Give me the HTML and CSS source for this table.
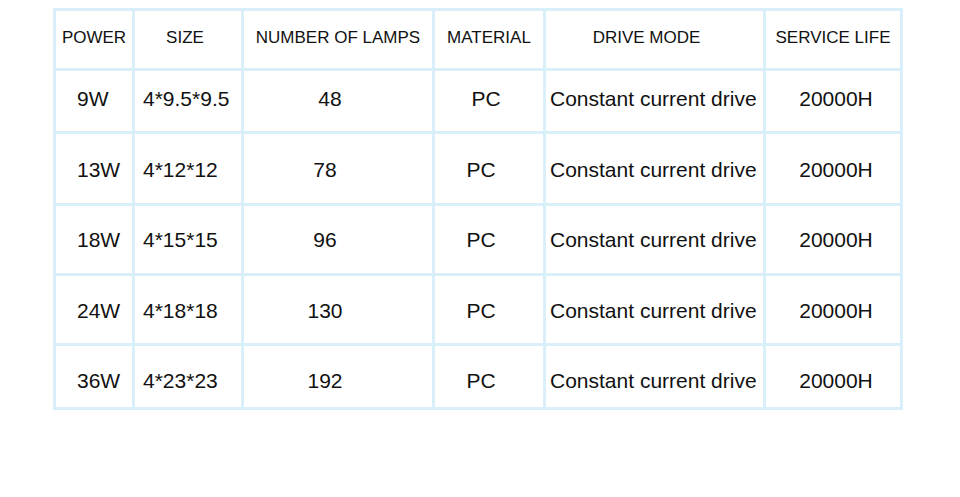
FILE: index.html
```html
<!DOCTYPE html>
<html>
<head>
<meta charset="utf-8">
<link rel="stylesheet" href="styles.css">
</head>
<body>
<div class="spec">
  <div class="cell head">POWER</div>
  <div class="cell head sz">SIZE</div>
  <div class="cell head">NUMBER OF LAMPS</div>
  <div class="cell head">MATERIAL</div>
  <div class="cell head dm">DRIVE MODE</div>
  <div class="cell head">SERVICE LIFE</div>

  <div class="cell r1 pw">9W</div>
  <div class="cell r1 sz-d">4*9.5*9.5</div>
  <div class="cell r1 num first">48</div>
  <div class="cell r1 mat first">PC</div>
  <div class="cell r1 drv">Constant current drive</div>
  <div class="cell r1 life">20000H</div>

  <div class="cell r2 pw">13W</div>
  <div class="cell r2 sz-d">4*12*12</div>
  <div class="cell r2 num">78</div>
  <div class="cell r2 mat">PC</div>
  <div class="cell r2 drv">Constant current drive</div>
  <div class="cell r2 life">20000H</div>

  <div class="cell pw">18W</div>
  <div class="cell sz-d">4*15*15</div>
  <div class="cell num">96</div>
  <div class="cell mat">PC</div>
  <div class="cell drv">Constant current drive</div>
  <div class="cell life">20000H</div>

  <div class="cell r4 pw">24W</div>
  <div class="cell r4 sz-d">4*18*18</div>
  <div class="cell r4 num">130</div>
  <div class="cell r4 mat">PC</div>
  <div class="cell r4 drv">Constant current drive</div>
  <div class="cell r4 life">20000H</div>

  <div class="cell r5 pw">36W</div>
  <div class="cell r5 sz-d">4*23*23</div>
  <div class="cell r5 num">192</div>
  <div class="cell r5 mat">PC</div>
  <div class="cell r5 drv">Constant current drive</div>
  <div class="cell r5 life">20000H</div>
</div>
</body>
</html>
```
FILE: styles.css
```css
html, body {
  margin: 0;
  padding: 0;
  background: #ffffff;
}
body {
  font-family: "Liberation Sans", Arial, sans-serif;
  color: #111;
}
.spec {
  margin: 8px 0 0 53px;
  width: 850px;
  box-sizing: border-box;
  display: grid;
  grid-template-columns: 76px 106px 188px 108px 217px 134px;
  grid-template-rows: 57px 60px 69px 67px 67px 61px;
  gap: 3px;
  padding: 3px;
  background: #d9eff9;
}
.cell {
  background: #ffffff;
  display: flex;
  align-items: center;
  justify-content: center;
  font-size: 21px;
  white-space: nowrap;
  box-sizing: border-box;
}
.head {
  font-size: 17px;
  padding-bottom: 4px;
}
.r1 { padding-bottom: 4px; }
.r2 { padding-top: 3px; }
.r4 { padding-top: 2px; }
.r5 { padding-top: 8px; }
.head.sz { padding-right: 6px; }
.head.dm { padding-right: 16px; }
.pw {
  justify-content: flex-start;
  padding-left: 21px;
}
.sz-d {
  justify-content: flex-start;
  padding-left: 8px;
}
.num { padding-right: 26px; }
.num.first { padding-right: 16px; }
.mat { padding-right: 16px; }
.mat.first { padding-right: 6px; }
.drv {
  justify-content: flex-start;
  padding-left: 4px;
}
.life { padding-left: 6px; }
```
